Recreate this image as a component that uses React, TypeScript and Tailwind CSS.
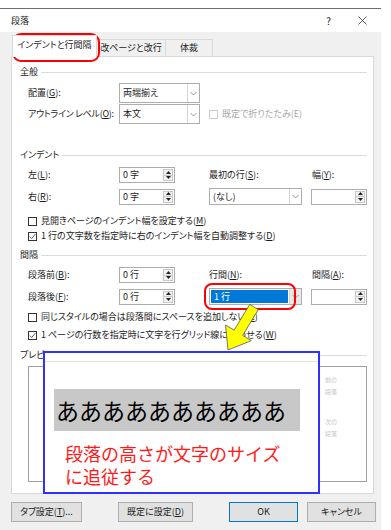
import React from "react";

const U = ({ c }: { c: string }) => (
  <span className="underline decoration-[0.5px] underline-offset-[1px]">{c}</span>
);

function Chevron() {
  return (
    <svg width="7" height="5" viewBox="0 0 7 5">
      <path d="M0.5 1 L3.5 4 L6.5 1" fill="none" stroke="#8a8a8a" strokeWidth="0.9" />
    </svg>
  );
}

function Combo({
  cls,
  text,
  highlight,
}: {
  cls: string;
  text: string;
  highlight?: boolean;
}) {
  return (
    <div className={`flex border border-[#adadad] bg-white ${cls}`}>
      {highlight ? (
        <div className="flex flex-1 p-[1px]">
          <div className="flex flex-1 items-center bg-[#0078d7] pl-[3px] text-white">{text}</div>
        </div>
      ) : (
        <div className="flex flex-1 items-center pl-[3px]">{text}</div>
      )}
      <div
        className={`flex w-[12px] items-center justify-center border-l border-[#d4d4d4] ${
          highlight ? "bg-[#e8e8e8]" : "bg-white"
        }`}
      >
        <Chevron />
      </div>
    </div>
  );
}

function Spin({ value }: { value?: string }) {
  return (
    <div className="flex h-[16px] w-[56px] border border-[#adadad] bg-white">
      <div className="flex flex-1 items-center pl-[3px]">{value}</div>
      <div className="my-[1px] mr-[1px] flex w-[10px] flex-col border border-[#c8c8c8] bg-[#f2f2f2]">
        <div className="flex flex-1 items-center justify-center border-b border-[#c8c8c8]">
          <svg width="5" height="3" viewBox="0 0 5 3">
            <path d="M0 3 L2.5 0 L5 3Z" fill="#222" />
          </svg>
        </div>
        <div className="flex flex-1 items-center justify-center">
          <svg width="5" height="3" viewBox="0 0 5 3">
            <path d="M0 0 L2.5 3 L5 0Z" fill="#222" />
          </svg>
        </div>
      </div>
    </div>
  );
}

function Check({
  checked,
  disabled,
  children,
}: {
  checked?: boolean;
  disabled?: boolean;
  children: React.ReactNode;
}) {
  return (
    <div className="flex h-[12px] items-center">
      <div
        className={`flex h-[9px] w-[9px] items-center justify-center border bg-white ${
          disabled ? "border-[#cccccc]" : "border-[#333333]"
        }`}
      >
        {checked && (
          <svg width="7" height="7" viewBox="0 0 7 7">
            <path d="M0.8 3.6 L2.7 5.5 L6.3 1.2" fill="none" stroke="#333" strokeWidth="0.8" />
          </svg>
        )}
      </div>
      <span className={`ml-[4px] ${disabled ? "text-[#a8a8a8]" : ""}`}>{children}</span>
    </div>
  );
}

function Group({ title }: { title: string }) {
  return (
    <div className="flex h-[12px] items-center pl-[8px] pr-[6px]">
      <span>{title}</span>
      <div className="ml-[3px] h-px flex-1 bg-[#dcdcdc]" />
    </div>
  );
}

export default function App() {
  return (
    <div className="relative h-[530px] w-[391px] overflow-hidden bg-white font-['Noto_Sans_CJK_JP',sans-serif] text-[9px] leading-[12px] text-[#1a1a1a] [font-feature-settings:'palt']">
      <div className="h-[8px]" />
      <div className="w-[381px] border-t border-[#6e6e6e]">
        {/* title bar */}
        <div className="flex h-[23px] items-center bg-white">
          <span className="ml-[11px]">段落</span>
          <span className="ml-auto text-[10px]">?</span>
          <svg className="ml-[27px] mr-[14px]" width="9" height="9" viewBox="0 0 9 9">
            <path d="M0.5 0.5 L8.5 8.5 M8.5 0.5 L0.5 8.5" stroke="#333" strokeWidth="0.8" />
          </svg>
        </div>
        {/* body */}
        <div className="h-[498px] bg-[#f0f0f0] pl-[11px]">
          <div className="flex h-[24px] items-end">
            <div className="relative z-10 mb-[-1px] ml-[1px] flex h-[22px] w-[85px] items-center justify-center border border-b-0 border-[#d9d9d9] bg-white pb-[3px]">
              インデントと行間隔
            </div>
            <div className="flex h-[17px] w-[69px] items-center justify-center border border-b-0 border-l-0 border-[#d9d9d9]">
              改ページと改行
            </div>
            <div className="flex h-[17px] w-[47px] items-center justify-center border border-b-0 border-l-0 border-[#d9d9d9]">
              体裁
            </div>
          </div>
          {/* panel */}
          <div className="h-[438px] w-[363px] border border-[#d9d9d9] bg-white">
            <div className="mt-[9px]">
              <Group title="全般" />
            </div>
            <div className="mt-[5px] flex h-[20px] items-center pl-[16px]">
              <span className="w-[91px]">
                配置(<U c="G" />):
              </span>
              <Combo cls="h-[20px] w-[81px]" text="両端揃え" />
            </div>
            <div className="mt-[1px] flex h-[20px] items-center pl-[16px]">
              <span className="w-[91px] tracking-[-0.3px]">
                アウトライン レベル(<U c="O" />):
              </span>
              <Combo cls="h-[20px] w-[81px]" text="本文" />
              <div className="ml-[9px]">
                <Check disabled>既定で折りたたみ(E)</Check>
              </div>
            </div>

            <div className="mt-[25px]">
              <Group title="インデント" />
            </div>
            <div className="mt-[6px] flex h-[16px] items-center pl-[16px]">
              <span className="w-[91px]">
                左(<U c="L" />):
              </span>
              <Spin value="0 字" />
              <span className="ml-[34px] w-[103px]">
                最初の行(<U c="S" />):
              </span>
              <span>
                幅(<U c="Y" />):
              </span>
            </div>
            <div className="mt-[5px] flex h-[17px] items-center pl-[16px]">
              <span className="w-[91px]">
                右(<U c="R" />):
              </span>
              <Spin value="0 字" />
              <Combo cls="ml-[34px] h-[17px] w-[93px]" text="(なし)" />
              <div className="ml-[9px]">
                <Spin />
              </div>
            </div>
            <div className="mt-[10px] pl-[16px]">
              <Check>
                見開きページのインデント幅を設定する(<U c="M" />)
              </Check>
            </div>
            <div className="mt-[3px] pl-[16px]">
              <Check checked>
                1 行の文字数を指定時に右のインデント幅を自動調整する(<U c="D" />)
              </Check>
            </div>

            <div className="mt-[7px]">
              <Group title="間隔" />
            </div>
            <div className="mt-[6px] flex h-[16px] items-center pl-[16px]">
              <span className="w-[91px]">
                段落前(<U c="B" />):
              </span>
              <Spin value="0 行" />
              <span className="ml-[34px] w-[103px]">
                行間(<U c="N" />):
              </span>
              <span>
                間隔(<U c="A" />):
              </span>
            </div>
            <div className="mt-[5px] flex h-[17px] items-center pl-[16px]">
              <span className="w-[91px]">
                段落後(<U c="F" />):
              </span>
              <Spin value="0 行" />
              <Combo cls="ml-[34px] h-[17px] w-[93px]" text="1 行" highlight />
              <div className="ml-[9px]">
                <Spin />
              </div>
            </div>
            <div className="mt-[6px] pl-[16px]">
              <Check>
                同じスタイルの場合は段落間にスペースを追加しない(<U c="C" />)
              </Check>
            </div>
            <div className="mt-[6px] pl-[16px]">
              <Check checked>
                1 ページの行数を指定時に文字を行グリッド線に合わせる(<U c="W" />)
              </Check>
            </div>

            <div className="mt-[8px]">
              <Group title="プレビュー" />
            </div>
            <div className="ml-[16px] mt-[5px] h-[116px] w-[339px] border border-[#a0a0a0] bg-white pl-[296px] pt-[7px] text-[6px] leading-[12px] text-[#c4c4c4]">
              <div>前の</div>
              <div>段落</div>
              <div className="h-[18px]" />
              <div>次の</div>
              <div>段落</div>
            </div>
          </div>
          {/* buttons */}
          <div className="mt-[8px] flex h-[20px]">
            <div className="flex w-[71px] items-center justify-center border border-[#adadad] bg-[#e1e1e1]">
              タブ設定(<U c="T" />)...
            </div>
            <div className="ml-[36px] flex w-[75px] items-center justify-center border border-[#adadad] bg-[#e1e1e1]">
              既定に設定(<U c="D" />)
            </div>
            <div className="ml-[36px] flex w-[69px] items-center justify-center border border-[#0078d7] bg-[#e1e1e1]">
              OK
            </div>
            <div className="ml-[9px] flex w-[69px] items-center justify-center border border-[#adadad] bg-[#e1e1e1]">
              キャンセル
            </div>
          </div>
        </div>
      </div>

      {/* annotations */}
      <div className="absolute left-[12px] top-[33px] h-[29px] w-[88px] rounded-[9px] border-2 border-[#ff0000]" />
      <div className="absolute left-[204px] top-[283px] h-[27px] w-[92px] rounded-[8px] border-2 border-[#ff0000]" />
      <svg className="absolute left-[215px] top-[295px]" width="55" height="65" viewBox="215 295 55 65">
        <polygon
          points="249.7,304.4 258.3,309.6 242.7,335.4 251.3,340.6 228,350 225.5,325 234.1,330.2"
          fill="#ffff00"
          stroke="#555"
          strokeWidth="0.8"
        />
      </svg>
      <div className="absolute left-[43px] top-[351px] h-[143px] w-[277px] border-2 border-[#3030ff] bg-white">
        <div className="mt-[8px] h-px bg-[#e2e2e2]" />
        <div className="ml-[9px] mt-[27px] flex h-[42px] w-[246px] items-center bg-[#c8c8c8] pl-[2px] text-[23px] leading-[30px] text-black [font-feature-settings:normal]">
          ああああああああああ
        </div>
        <div className="ml-[20px] mt-[11px] text-[18px] leading-[23px] text-[#ff1a1a] [font-feature-settings:normal]">
          <div>段落の高さが文字のサイズ</div>
          <div>に追従する</div>
        </div>
      </div>
    </div>
  );
}
